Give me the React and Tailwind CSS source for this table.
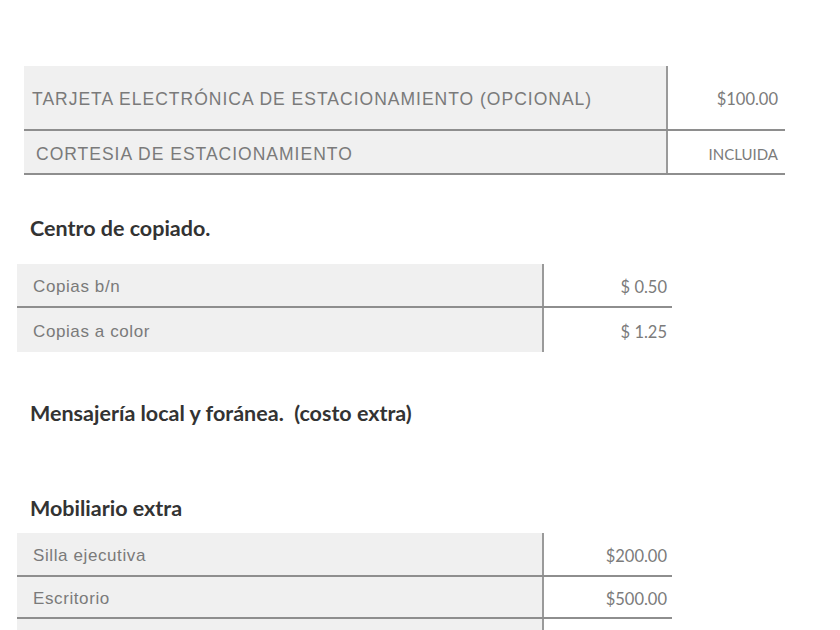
import React from "react";

const arial = { fontFamily: '"Liberation Sans", Arial, sans-serif' };
const cal = { fontFamily: 'Lato, "Open Sans", sans-serif' };

function Row({ label, price, h, bottom, leftW, labelPl = "pl-[16px]", priceCls = "text-[16.5px]", priceAlign = "pr-[5px]", labelCls }) {
  return (
    <div className={`flex shrink-0 ${h} ${bottom ? "border-b-2 border-[#8e8e8e]" : ""}`}>
      <div className={`${leftW} shrink-0 bg-[#f0f0f0] border-r-2 border-[#9a9a9a] flex items-center pt-[4px] ${labelPl}`}>
        <span className={labelCls} style={arial}>{label}</span>
      </div>
      <div className={`flex-1 flex items-center justify-end pt-[4px] ${priceAlign}`}>
        <span className={`${priceCls} text-[#7b7b7b]`} style={cal}>{price}</span>
      </div>
    </div>
  );
}

function Heading({ children, cls }) {
  return (
    <div className={`flex shrink-0 items-center h-[40px] pl-[30px] ${cls}`}>
      <span className="text-[21.5px] font-bold text-[#333333]" style={cal}>{children}</span>
    </div>
  );
}

export default function App() {
  return (
    <div className="w-[840px] h-[630px] overflow-hidden bg-white flex flex-col pt-[66px]">
      <div className="ml-[24px] w-[761px] shrink-0 flex flex-col">
        <Row
          label="TARJETA ELECTRÓNICA DE ESTACIONAMIENTO (OPCIONAL)"
          price="$100.00"
          h="h-[65px]"
          bottom
          leftW="w-[644px]"
          labelPl="pl-[8px]"
          labelCls="text-[17.5px] tracking-[1px] text-[#7a7a7a]"
          priceAlign="pr-[7px]"
          priceCls="text-[16.5px]"
        />
        <Row
          label="CORTESIA DE ESTACIONAMIENTO"
          price="INCLUIDA"
          h="h-[44px]"
          bottom
          leftW="w-[644px]"
          labelPl="pl-[12px]"
          labelCls="text-[17.5px] tracking-[1px] text-[#7a7a7a]"
          priceAlign="pr-[7px]"
          priceCls="text-[15px]"
        />
      </div>

      <Heading cls="mt-[33px]">Centro de copiado.</Heading>

      <div className="ml-[17px] w-[655px] mt-[16px] shrink-0 flex flex-col">
        <Row label="Copias b/n" price="$ 0.50" h="h-[44px]" bottom leftW="w-[527px]" labelCls="text-[17px] tracking-[0.6px] text-[#7a7a7a]" />
        <Row label="Copias a color" price="$ 1.25" h="h-[44px]" leftW="w-[527px]" labelCls="text-[17px] tracking-[0.6px] text-[#7a7a7a]" />
      </div>

      <Heading cls="mt-[41px]">Mensajería local y foránea.&nbsp; (costo extra)</Heading>

      <Heading cls="mt-[55px]">Mobiliario extra</Heading>

      <div className="ml-[17px] w-[655px] mt-[5px] shrink-0 flex flex-col">
        <Row label="Silla ejecutiva" price="$200.00" h="h-[44px]" bottom leftW="w-[527px]" labelCls="text-[17px] tracking-[0.6px] text-[#7a7a7a]" />
        <Row label="Escritorio" price="$500.00" h="h-[42px]" bottom leftW="w-[527px]" labelCls="text-[17px] tracking-[0.6px] text-[#7a7a7a]" />
        <Row label="" price="" h="h-[40px]" leftW="w-[527px]" />
      </div>
    </div>
  );
}
